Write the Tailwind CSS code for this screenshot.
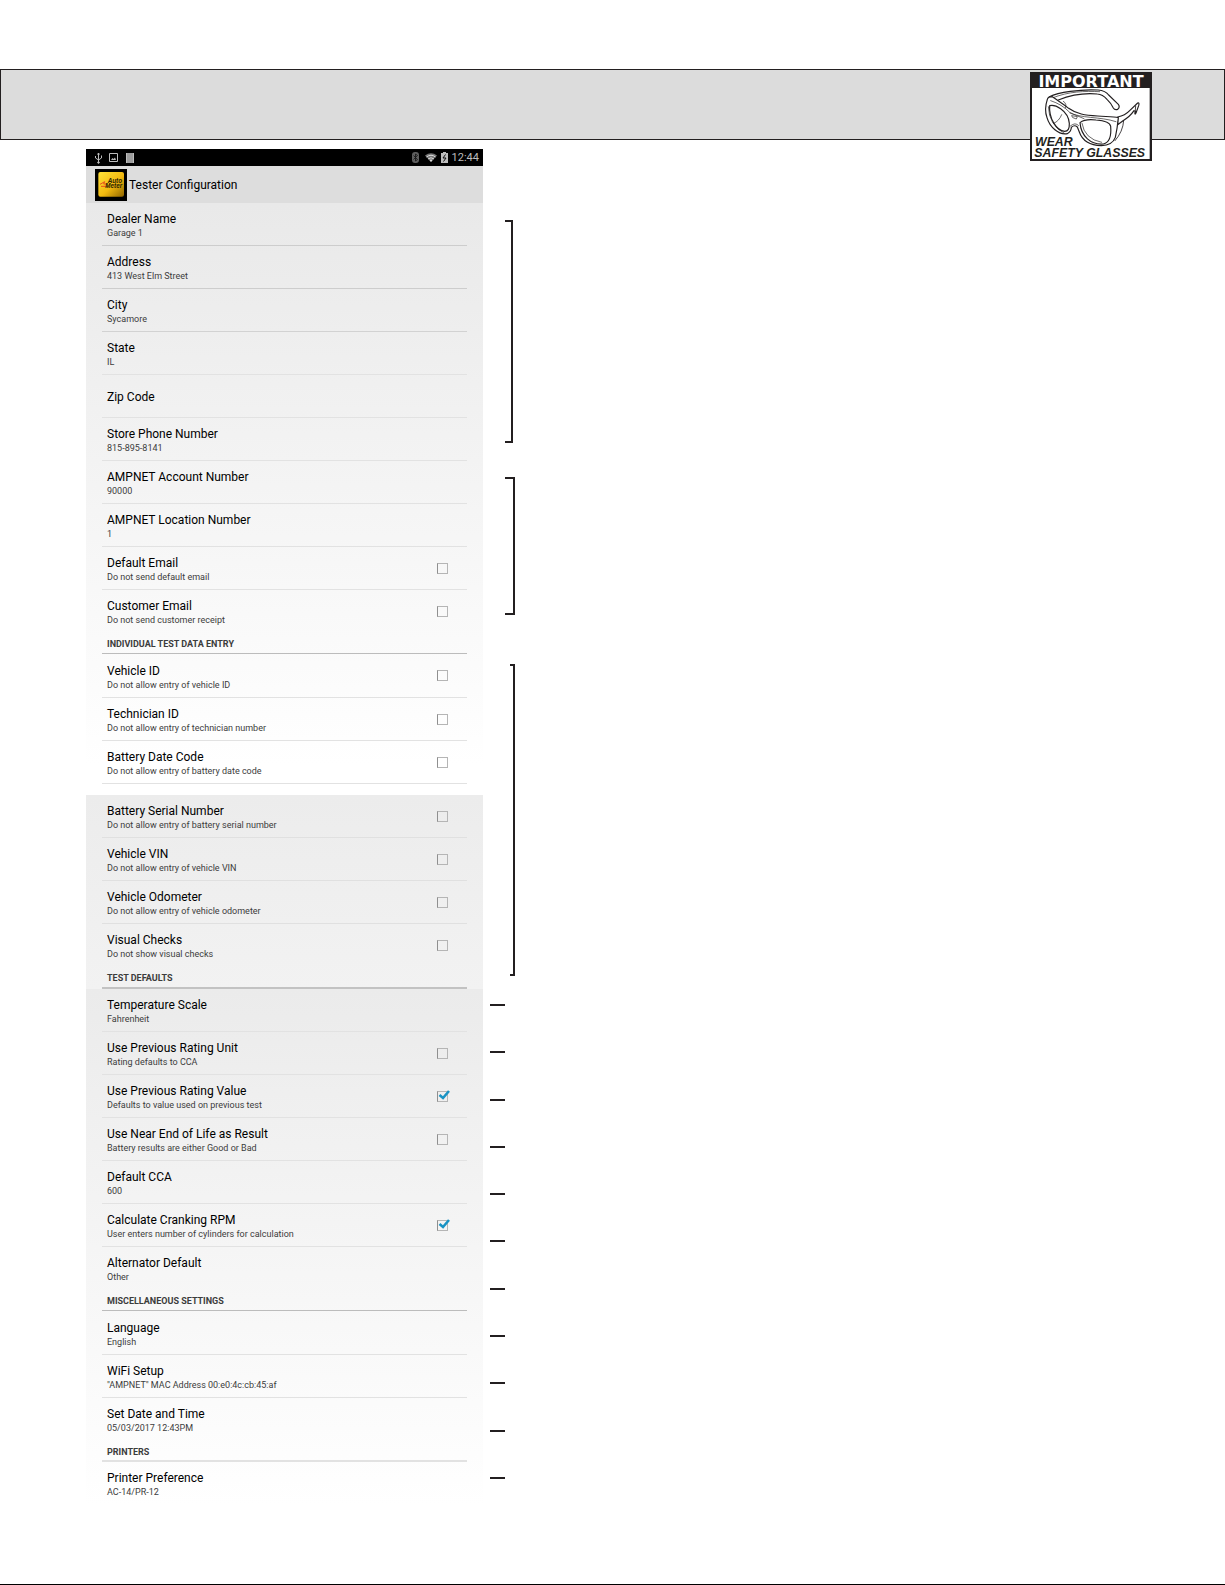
<!DOCTYPE html>
<html lang="en">
<head>
<meta charset="utf-8">
<title>Tester Configuration</title>
<script src="https://cdn.jsdelivr.net/npm/@tailwindcss/browser@4"></script>
</head>
<body class="bg-white font-['Roboto',sans-serif] text-black">
<div class="flex min-h-screen flex-col border-b border-black pt-[69px]">
  <header class="relative h-[71px] border border-[#231f20] bg-[#dcdcdc]">
    <svg class="absolute right-[72px] top-[2px] h-[89px] w-[122px]" viewBox="45 50 366 267" role="img" aria-label="Important: wear safety glasses">
      <rect x="45" y="50" width="366" height="267" fill="#231f20"/>
      <rect x="51" y="98" width="353" height="213" fill="#fff"/>
      <text x="228" y="94" text-anchor="middle" fill="#fff" font-family="DejaVu Sans" font-weight="bold" font-size="48">IMPORTANT</text>
      <g fill="#fff" stroke="#231f20" stroke-width="3.5" stroke-linejoin="round" stroke-linecap="round">
        <path d="M103 124 C130 111 195 101 249 104 Q272 106 281 119 L310 147 Q316 155 308 162 Q299 165 295 158 Q287 142 276 132 Q263 117 247 116 C205 112 165 120 130 134"/>
        <path d="M112 128 C160 108 210 107 254 109" fill="none" stroke-width="2"/>
        <path d="M308 185 Q330 181 344 166 L368 143 Q374 141 371 151 L363 173 Q359 180 361 168 L357 166 Q345 184 324 196 L308 208Z"/>
        <path d="M362 152 L360 176 M326 196 Q324 229 300 256" fill="none" stroke-width="2.5"/>
        <path d="M97 132 Q99 124 112 124 C130 137 144 145 161 159 C184 176 210 180 248 182 C275 184 296 184 310 187 Q307 219 301 246 Q292 270 259 271 C223 270 201 253 193 230 L187 215 Q178 207 169 216 Q169 229 157 235 C131 240 104 215 96 187 Q87 162 97 132Z"/>
        <path d="M104 151 Q118 147 137 160 Q161 177 163 204 Q164 228 149 228 C124 226 101 188 104 151Z"/>
        <path d="M195 202 Q210 190 243 194 Q285 197 287 213 Q291 260 265 266 C228 269 198 243 195 202Z"/>
        <path d="M100 154 Q102 210 148 234 M201 204 Q208 251 260 261 M107 136 Q141 147 164 171 C194 190 256 183 303 199 M165 173 Q184 180 207 190 M171 181 L187 184 L184 191 L174 187Z M166 212 Q181 199 191 211 M145 138 Q157 145 151 158 M116 204 Q132 198 140 178" fill="none" stroke-width="2"/>
      </g>
      <g fill="#231f20" font-family="Liberation Sans" font-weight="bold" font-style="italic" font-size="37">
        <text x="60" y="271">WEAR</text>
        <text x="58" y="304">SAFETY GLASSES</text>
      </g>
    </svg>
  </header>

  <main class="flex items-start pl-[86px] pt-[9px]">
    <section class="w-[397px] shrink-0">
      <div class="flex h-[17px] items-center bg-black pl-2 pr-1 text-[#bdbdbd]">
        <svg class="h-3 w-[9px]" viewBox="0 0 9 12" fill="none" stroke="currentColor"><path d="M4.500 1v9M1.500 4v2l3 2 3-2V3.500M3.500 2.500l1-1.500 1 1.500"/><circle cx="4.500" cy="10.500" r=".8" fill="currentColor"/></svg>
        <svg class="ml-[6px] h-[9px] w-[9px]" viewBox="0 0 9 9" fill="none" stroke="currentColor"><path d="M.5.5h8v8h-8z"/><path d="M2 7l1.500-2 1 1L6 4.500 7 7z" fill="currentColor" stroke="none"/></svg>
        <svg class="ml-2 h-[10px] w-2" viewBox="0 0 8 10"><path fill="currentColor" d="M0 0h8v10H0z"/><path stroke="#555" stroke-width=".6" d="M2 0v10M4 0v10M6 0v10"/></svg>
        <svg class="ml-auto h-[11px] w-[7px] text-[#5e5e5e]" viewBox="0 0 7 11"><rect width="7" height="11" rx="3" fill="currentColor"/><path d="M1.500 3.500l4 4-2 1.500V2l2 1.500-4 4" fill="none" stroke="#111" stroke-width=".8"/></svg>
        <svg class="ml-[6px] h-[9px] w-3" viewBox="0 0 12 9"><path d="M0 2.500Q6-2 12 2.500L6 9z" fill="#777"/><path d="M1.500 4Q6 .5 10.500 4M3 6Q6 3.500 9 6" fill="none" stroke="#ddd"/><path d="M4.500 7Q6 6 7.500 7L6 9z" fill="#ddd"/></svg>
        <svg class="ml-1 h-[11px] w-[7px]" viewBox="0 0 7 11"><path d="M2 0h3v1h2v10H0V1h2z" fill="currentColor"/><path d="M4.500 2.500L2 6h3L2.500 9.500" fill="none" stroke="#111"/></svg>
        <span class="ml-1 text-[11px] leading-4">12:44</span>
      </div>
      <div class="flex h-[38px] items-center border-b border-[#b9b9b9] bg-[#dddddd] pl-[9px]">
        <svg class="h-8 w-8" viewBox="0 0 96 96" role="img" aria-label="Auto Meter">
          <defs><linearGradient id="gold" x1="0" y1="0" x2="1" y2="1"><stop stop-color="#ffe23a"/><stop offset=".55" stop-color="#f2b90f"/><stop offset="1" stop-color="#8f6500"/></linearGradient></defs>
          <rect width="96" height="96"/><rect x="10" y="9" width="77" height="74" rx="6" fill="url(#gold)"/>
          <path d="M15 46l14-8-3 7h10M18 52h20" fill="none" stroke="#e8501e" stroke-width="3"/>
          <g font-family="Liberation Sans" font-weight="bold" font-style="italic" font-size="19" fill="#2a2000"><text x="38" y="43">Auto</text><text x="31" y="57">Meter</text></g>
        </svg>
        <h1 class="ml-[2px] text-xs leading-4">Tester Configuration</h1>
      </div>

      <div class="bg-linear-to-b from-[#e9e9e9] to-white to-95% px-4 pb-[11px] [&_b]:block [&_b]:text-xs [&_b]:leading-4 [&_b]:font-normal [&_small]:block [&_small]:text-[9px] [&_small]:leading-3 [&_small]:text-[#3c3c3c] [&>button]:block [&>button]:h-[43px] [&>button]:w-full [&>button]:border-b [&>button]:border-[#e2e2e2] [&>button]:px-[5px] [&>button]:pt-[2px] [&>button]:text-left [&_label]:flex [&_label]:h-[43px] [&_label]:items-center [&_label]:justify-between [&_label]:border-b [&_label]:border-[#e2e2e2] [&_label]:pt-[2px] [&_label]:pl-[5px] [&_label]:pr-[19px] [&_input]:mb-[2px] [&_input]:size-[11px] [&_input]:appearance-none [&_input]:border [&_input]:border-[#b5b5b5] [&_input]:border-l-[#8f8f8f]">
        <button type="button" class="-mt-px border-[#cdcdcd]!"><b>Dealer Name</b><small>Garage 1</small></button>
        <button type="button" class="border-[#cdcdcd]!"><b>Address</b><small>413 West Elm Street</small></button>
        <button type="button" class="border-[#d2d2d2]!"><b>City</b><small>Sycamore</small></button>
        <button type="button"><b>State</b><small>IL</small></button>
        <button type="button"><b>Zip Code</b></button>
        <button type="button"><b>Store Phone Number</b><small>815-895-8141</small></button>
        <button type="button"><b>AMPNET Account Number</b><small>90000</small></button>
        <button type="button"><b>AMPNET Location Number</b><small>1</small></button>
        <label><span><b>Default Email</b><small>Do not send default email</small></span><input type="checkbox"></label>
        <label class="border-transparent!"><span><b>Customer Email</b><small>Do not send customer receipt</small></span><input type="checkbox"></label>
        <h2 class="h-[21px] border-b border-[#bcbcbc] pl-[5px] pt-px text-[9px] leading-5 font-bold text-[#3c3c3c]">INDIVIDUAL TEST DATA ENTRY</h2>
        <label class="h-[44px]!"><span><b>Vehicle ID</b><small>Do not allow entry of vehicle ID</small></span><input type="checkbox"></label>
        <label><span><b>Technician ID</b><small>Do not allow entry of technician number</small></span><input type="checkbox"></label>
        <label><span><b>Battery Date Code</b><small>Do not allow entry of battery date code</small></span><input type="checkbox"></label>
      </div>

      <div class="bg-linear-to-b from-[#ececec] to-[#f2f2f2] px-4 [&_b]:block [&_b]:text-xs [&_b]:leading-4 [&_b]:font-normal [&_small]:block [&_small]:text-[9px] [&_small]:leading-3 [&_small]:text-[#3c3c3c] [&_label]:flex [&_label]:h-[43px] [&_label]:items-center [&_label]:justify-between [&_label]:border-b [&_label]:border-[#e0e0e0] [&_label]:pt-[2px] [&_label]:pl-[5px] [&_label]:pr-[19px] [&_input]:mb-[2px] [&_input]:size-[11px] [&_input]:appearance-none [&_input]:border [&_input]:border-[#b5b5b5] [&_input]:border-l-[#8f8f8f]">
        <label><span><b>Battery Serial Number</b><small>Do not allow entry of battery serial number</small></span><input type="checkbox"></label>
        <label><span><b>Vehicle VIN</b><small>Do not allow entry of vehicle VIN</small></span><input type="checkbox"></label>
        <label><span><b>Vehicle Odometer</b><small>Do not allow entry of vehicle odometer</small></span><input type="checkbox"></label>
        <label class="border-transparent!"><span><b>Visual Checks</b><small>Do not show visual checks</small></span><input type="checkbox"></label>
        <h2 class="h-[22px] border-b-2 border-[#c2c2c2] pl-[5px] pt-px text-[9px] leading-5 font-bold text-[#3c3c3c]">TEST DEFAULTS</h2>
      </div>

      <div class="bg-linear-to-b from-[#ebebeb] to-white px-4 [&_b]:block [&_b]:text-xs [&_b]:leading-4 [&_b]:font-normal [&_small]:block [&_small]:text-[9px] [&_small]:leading-3 [&_small]:text-[#3c3c3c] [&>button]:block [&>button]:h-[43px] [&>button]:w-full [&>button]:border-b [&>button]:border-[#e2e2e2] [&>button]:px-[5px] [&>button]:pt-[2px] [&>button]:text-left [&_label]:flex [&_label]:h-[43px] [&_label]:items-center [&_label]:justify-between [&_label]:border-b [&_label]:border-[#e2e2e2] [&_label]:pt-[2px] [&_label]:pl-[5px] [&_label]:pr-[19px] [&_input]:mb-[2px] [&_input]:size-[11px] [&_input]:appearance-none [&_input]:border [&_input]:border-[#b5b5b5] [&_input]:border-l-[#8f8f8f]">
        <button type="button"><b>Temperature Scale</b><small>Fahrenheit</small></button>
        <label><span><b>Use Previous Rating Unit</b><small>Rating defaults to CCA</small></span><input type="checkbox"></label>
        <label class="relative"><span><b>Use Previous Rating Value</b><small>Defaults to value used on previous test</small></span><input type="checkbox" checked><svg class="absolute right-[17px] top-[15px] h-[10px] w-3" viewBox="0 0 12 10" fill="none" stroke="#1993c4" stroke-width="2.600"><path d="M1.500 5l3.500 3 6-7"/></svg></label>
        <label><span><b>Use Near End of Life as Result</b><small>Battery results are either Good or Bad</small></span><input type="checkbox"></label>
        <button type="button"><b>Default CCA</b><small>600</small></button>
        <label class="relative"><span><b>Calculate Cranking RPM</b><small>User enters number of cylinders for calculation</small></span><input type="checkbox" checked><svg class="absolute right-[17px] top-[15px] h-[10px] w-3" viewBox="0 0 12 10" fill="none" stroke="#1993c4" stroke-width="2.600"><path d="M1.500 5l3.500 3 6-7"/></svg></label>
        <button type="button" class="border-transparent!"><b>Alternator Default</b><small>Other</small></button>
        <h2 class="h-[21px] border-b border-[#bcbcbc] pl-[5px] pt-px text-[9px] leading-5 font-bold text-[#3c3c3c]">MISCELLANEOUS SETTINGS</h2>
        <button type="button" class="h-[44px]!"><b>Language</b><small>English</small></button>
        <button type="button"><b>WiFi Setup</b><small>"AMPNET" MAC Address 00:e0:4c:cb:45:af</small></button>
        <button type="button" class="border-transparent!"><b>Set Date and Time</b><small>05/03/2017 12:43PM</small></button>
        <h2 class="h-[21px] border-b-2 border-[#e2e2e2] pl-[5px] pt-px text-[9px] leading-5 font-bold text-[#3c3c3c]">PRINTERS</h2>
        <button type="button" class="border-transparent!"><b>Printer Preference</b><small>AC-14/PR-12</small></button>
      </div>
    </section>

    <aside class="flex w-8 flex-col pl-[7px] pt-[71px]" aria-hidden="true">
      <div class="ml-[15px] h-[223px] w-2 border-y-2 border-r-2 border-[#231f20]"></div>
      <div class="ml-[15px] mt-[34px] h-[138px] w-[10px] border-y-2 border-r-2 border-[#231f20]"></div>
      <div class="ml-5 mt-[49px] h-[312px] w-[5px] border-y-2 border-r-2 border-[#231f20]"></div>
      <div class="mt-7 flex h-[475px] w-[15px] flex-col justify-between [&>i]:h-[2px] [&>i]:bg-[#231f20]">
        <i></i><i></i><i></i><i></i><i></i><i></i><i></i><i></i><i></i><i></i><i></i>
      </div>
    </aside>
  </main>
</div>
</body>
</html>
